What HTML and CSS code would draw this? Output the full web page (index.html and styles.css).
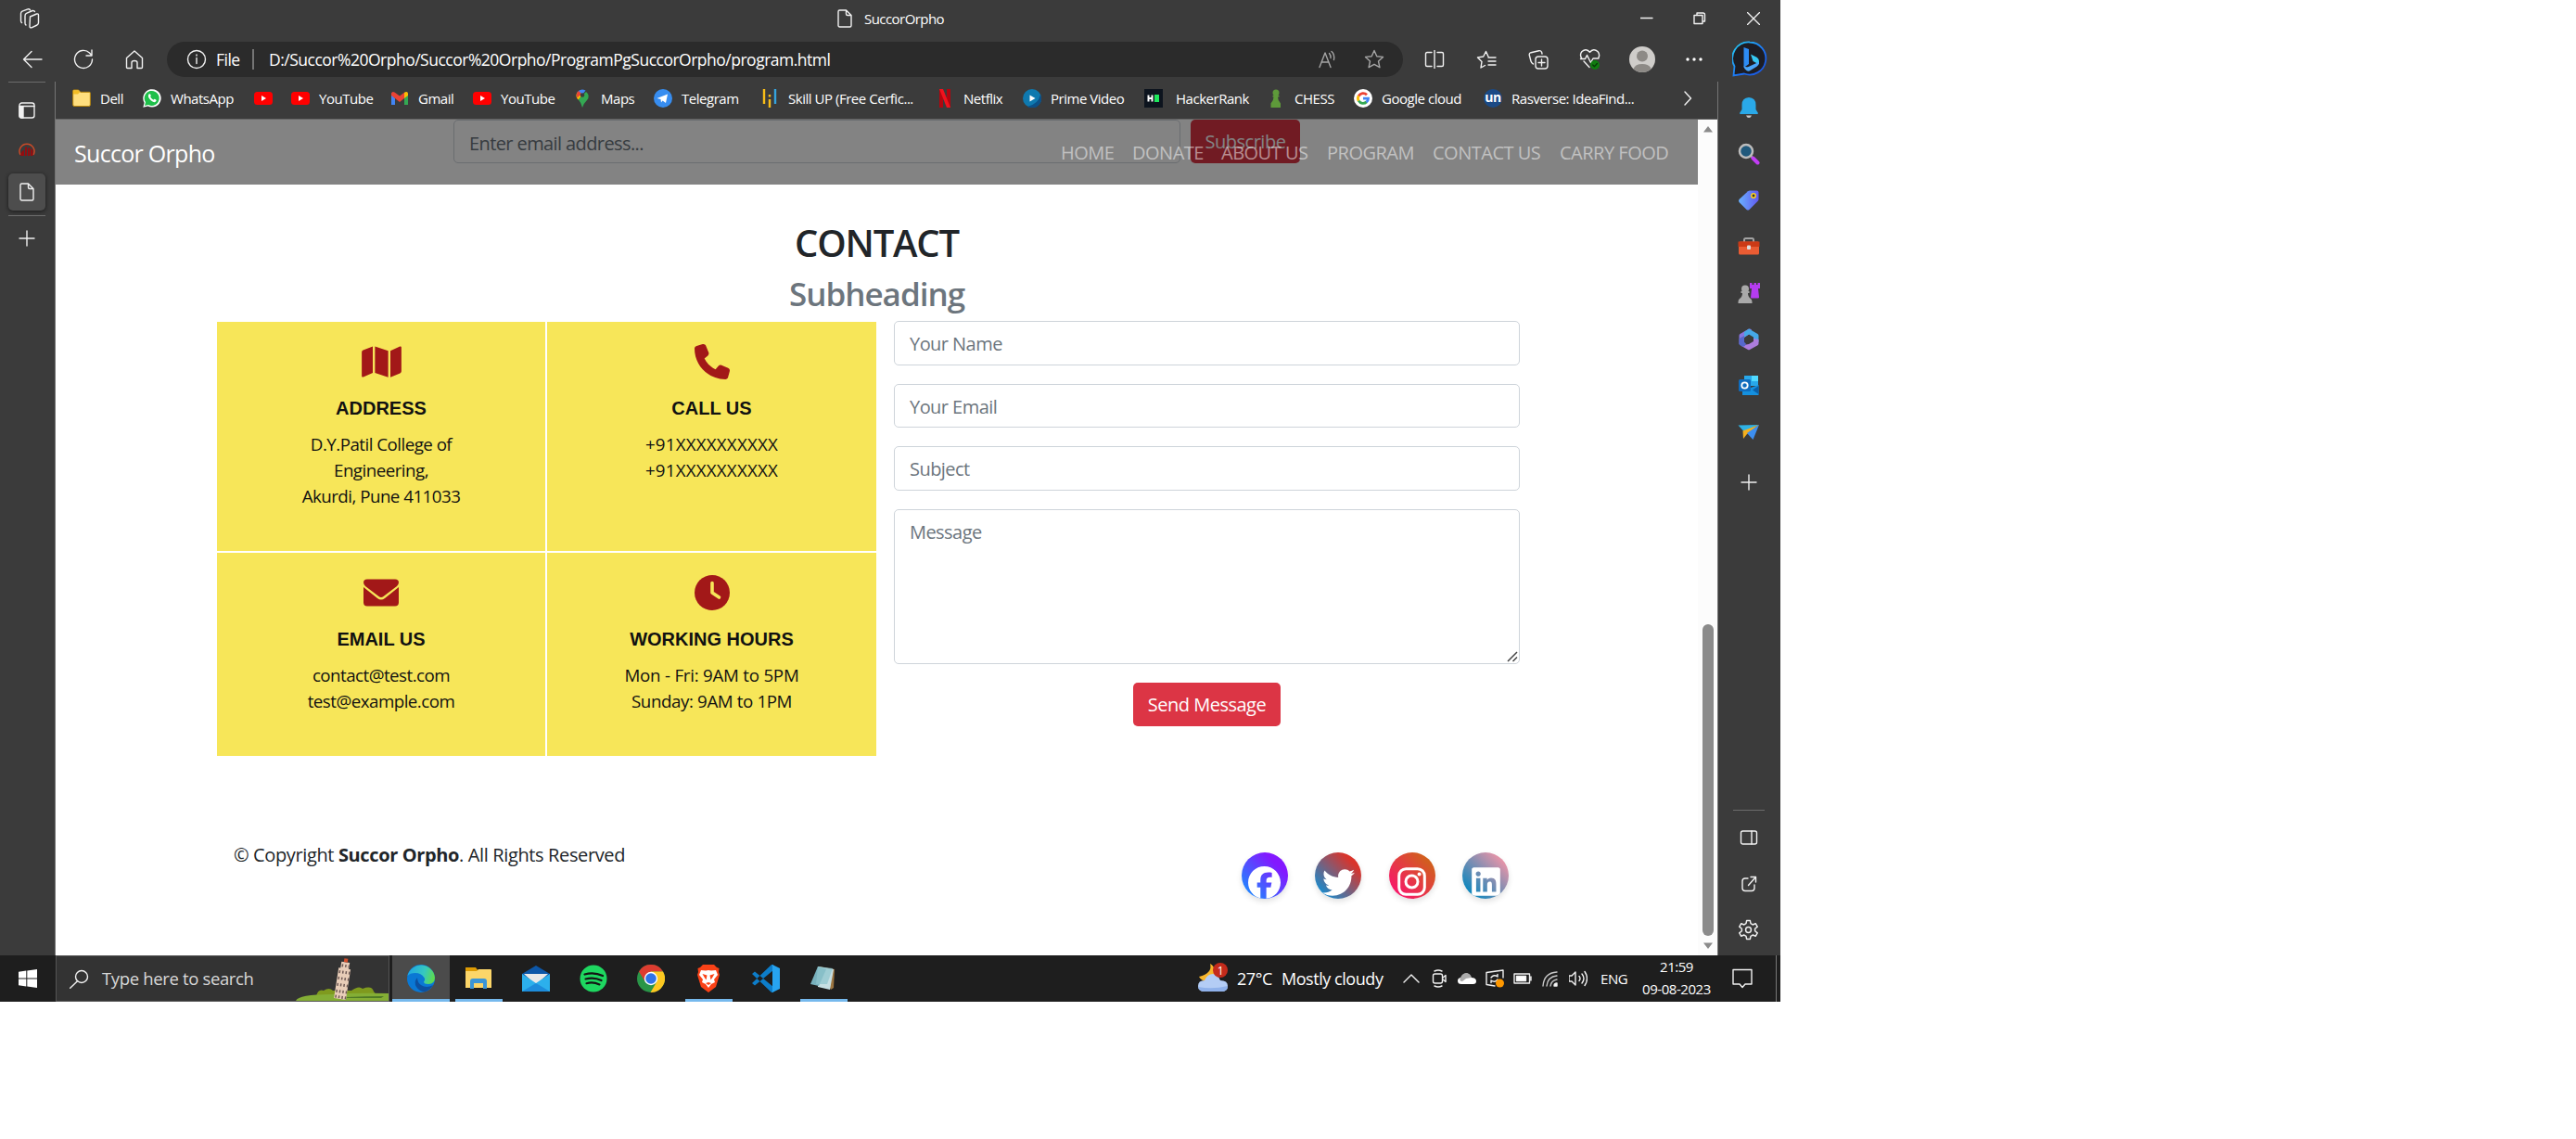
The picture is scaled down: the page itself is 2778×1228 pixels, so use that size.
FILE: index.html
```html
<!DOCTYPE html>
<html lang="en">
<head>
<meta charset="utf-8">
<title>SuccorOrpho</title>
<link rel="stylesheet" href="styles.css">
</head>
<body>
<svg class="defs" aria-hidden="true">
  <symbol id="doc" viewBox="0 0 16 20"><path d="M2.500 1h7L15 6.500V17.500a1.500 1.500 0 0 1-1.500 1.500h-11A1.500 1.500 0 0 1 1 17.500v-15A1.500 1.500 0 0 1 2.500 1zM9.500 1v4a1.500 1.500 0 0 0 1.500 1.500h4"/></symbol>
  <symbol id="yt" viewBox="0 0 20 20"><rect y="3" width="20" height="14" rx="3.500" fill="#f00"/><path d="M8 7v6l5-3z" fill="#fff"/></symbol>
  <symbol id="plus" viewBox="0 0 18 18"><path d="M9 1v16M1 9h16"/></symbol>
</svg>
<div class="screen">
  <header class="titlebar">
    <svg class="ln tabs-icon" viewBox="0 0 22 22"><path d="M11.500 9l7-3q2-.5 2 1.500v8q0 1.700-1.500 2.500l-6 2.800q-2 .5-2-1.500zM7 18q-1-.5-1-2V8q0-2 1.500-2.700l6.500-2.800q2-.3 2.500 1M2.500 15.500q-1-.5-1-2V5.500q0-1.500 1.500-2.300L9 .9q1.500-.4 2.500.8"/></svg>
    <div class="tab-title"><svg class="ln doc"><use href="#doc"/></svg><span>SuccorOrpho</span></div>
    <div class="win-buttons">
      <span><svg class="ln" width="14" height="14"><path d="M0 6.500h13"/></svg></span>
      <span><svg class="ln" width="14" height="14"><path d="M1 3.500h9v9H1zM4 3.500V1h6.500q2 0 2 2v7h-2"/></svg></span>
      <span><svg class="ln" width="14" height="14"><path d="M.5.5l13 13M13.500.5l-13 13"/></svg></span>
    </div>
  </header>

  <div class="toolbar">
    <div class="nav-buttons">
      <span><svg class="ln" width="22" height="20"><path d="M21 10H1.500M10 1.500L1.500 10l8.500 8.500"/></svg></span>
      <span><svg class="ln" width="22" height="22"><path d="M20.500 11a9.500 9.500 0 1 1-3-7l2.500 2.700M20 1v6h-6"/></svg></span>
      <span><svg class="ln" width="20" height="22"><path d="M1.500 9.500L10 2l8.500 7.500v10q0 1-1 1H13v-6q0-2-3-2t-3 2v6H2.500q-1 0-1-1z"/></svg></span>
    </div>
    <div class="address">
      <svg class="ln info" width="22" height="22"><circle cx="11" cy="11" r="9.500"/><path d="M11 9.500v6M11 6v1"/></svg>
      <span class="scheme">File</span>
      <span class="url">D:/Succor%20Orpho/Succor%20Orpho/ProgramPgSuccorOrpho/program.html</span>
      <svg class="ln dim" width="22" height="20"><path d="M2 18.500L8 3l6 15.500M4 13h8M12.500 3.500q2 2.500 1.500 5M15 1.500q3.500 3 2.500 9"/></svg>
      <svg class="ln dim star" width="22" height="22"><path d="M11 1.500l2.800 6.200 6.700.7-5 4.600 1.400 6.700-5.900-3.400-5.900 3.400L6.500 13l-5-4.600 6.700-.7z"/></svg>
    </div>
    <div class="actions">
      <span><svg class="ln" width="22" height="20"><path d="M11 0v20M8 2.500H3q-1.500 0-1.500 1.500v12q0 1.500 1.500 1.500h5M14 2.500h5q1.500 0 1.500 1.500v12q0 1.500-1.500 1.500h-5"/></svg></span>
      <span><svg class="ln" width="22" height="20"><path d="M13 7L10.500 1.500 7.700 7 1.500 8l4.500 4.500-1 6.500 4.500-2.500M13 8h8M13 12h8M13 16h8"/></svg></span>
      <span><svg class="ln" width="22" height="22"><rect x="8" y="8" width="13" height="13" rx="3"/><path d="M14.500 11v7M11 14.500h7M5.500 16Q3.500 15 3 13L1.300 6.500q-.5-2 1.700-2.800l8.500-2q2-.5 3 1.300l.5 2"/></svg></span>
      <span><svg class="ln" width="24" height="24"><path d="M3 11.500Q0 7 3 3.500q4.500-4 8.500.8 4-4.800 8.500-.8 3 3.500.5 7.500M1.500 11.500h5l2-4 4 8 2.500-4.500h6M5 14l6 6.500"/><circle cx="17" cy="18" r="5" fill="#107c10" stroke="none"/><path d="M14.700 18l1.700 1.800 3-3.300" stroke="#073d07"/></svg></span>
      <span><svg width="28" height="28"><circle cx="14" cy="14" r="14" fill="#cfcdca"/><circle cx="14" cy="10.500" r="6" fill="#8d8a86"/><path d="M4.500 24.200a9.800 7 0 0 1 19 0A14 14 0 0 1 4.500 24.200z" fill="#8d8a86"/></svg></span>
      <span><svg width="18" height="4" fill="#fff"><circle cx="2" cy="2" r="1.700"/><circle cx="9" cy="2" r="1.700"/><circle cx="16" cy="2" r="1.700"/></svg></span>
      <span class="bing"><svg width="38" height="40" viewBox="0 0 38 40"><defs><linearGradient id="bg" x1="0" y1="0" x2="1" y2="1"><stop offset="0" stop-color="#27d3f5"/><stop offset=".6" stop-color="#1b6ef3"/><stop offset="1" stop-color="#1a4fd8"/></linearGradient></defs><path d="M19 1.500a17.500 17.500 0 1 1-6 34L1.500 37.500l1-10A17.500 17.500 0 0 1 19 1.500z" fill="#1d1d24" stroke="url(#bg)" stroke-width="1.800"/><path d="M12.500 7l5.500 2v16l-5.500 4z" fill="#2d8cf5"/><path d="M20 14.500l6 3q3 1.500 3 5v3l-6.500-3.500z" fill="#35c7f2"/><path d="M12.500 27q0 3 3 5 2 1.300 4 0l7-4.300q2.500-2 2.500-5l-11 5q-3 1.500-5.500-.7z" fill="#4aa6fa"/></svg></span>
    </div>
  </div>

  <div class="middle">
    <aside class="left-rail">
      <svg class="ln" width="18" height="18"><rect x="1" y="1" width="16" height="16" rx="2.500"/><path d="M1 4.500h16"/><path d="M1 5h4v12H3q-2 0-2-2z" fill="#f1f1f1"/></svg>
      <svg width="18" height="16"><path d="M2 13A8 8 0 1 1 16 13" fill="none" stroke="#c84a28" stroke-width="1.500"/><path d="M2 14l1-4 3-2.500V14zM7 14V5l2-1v10zM10 14V6l2.200-1v9zM13 14V6l2.500 2v6z" fill="#930d10"/></svg>
      <span class="active-tab"><svg class="ln doc"><use href="#doc"/></svg></span>
      <hr>
      <svg class="ln new-tab" width="18" height="18"><use href="#plus"/></svg>
    </aside>

    <div class="center">
      <nav class="bookmarks">
        <a><svg viewBox="0 0 20 20"><path d="M.7 2q0-1 1-1h5l2 2.300h9.600q1 0 1 1V17q0 1.500-1.500 1.500H2.200Q.7 18.500.7 17z" fill="#ffdf7e" stroke="#b8860b"/><path d="M1 1.500h5.500l1.500 2-2 2H1z" fill="#f3bd26"/></svg>Dell</a>
        <a><svg viewBox="0 0 20 20"><path d="M.3 19.800l1.300-5A9.700 9.700 0 1 1 5.500 18.500z" fill="#fff"/><path d="M2 18l1-3.700A8 8 0 1 1 6 17z" fill="#1fbf4a"/><path d="M6.500 5.500q1.500-1 2 .8.700 1.400-.4 2 1.200 2.500 3.300 3.400 1-1.500 2-.7 2 .8 1 2Q13 15.500 9 12.500 4.500 8.500 6.500 5.500z" fill="#fff"/></svg>WhatsApp</a>
        <a><svg><use href="#yt"/></svg></a>
        <a><svg><use href="#yt"/></svg>YouTube</a>
        <a class="g"><svg viewBox="0 0 20 16"><path d="M1 2.500V15h4V8z" fill="#4285f4"/><path d="M19 2.500V15h-4V8z" fill="#34a853"/><path d="M19 2.500q-1-2.500-4-.8V8l4-3z" fill="#fbbc04"/><path d="M1 5V2.500q1-2.500 3.500-1L10 5.500l5-3.800V8l-5 4-5-4z" fill="#ea4335"/></svg>Gmail</a>
        <a><svg><use href="#yt"/></svg>YouTube</a>
        <a><svg viewBox="0 0 20 20"><path d="M10 20Q9 15 5.500 11L14 3q5 4 1 9-4 4-5 8z" fill="#34a853"/><path d="M4.500 3.500Q2 8 5.500 11.500L9 7.500z" fill="#fbbc04"/><path d="M4.500 3.700Q8-1.500 13.500 1.500L9 7.500z" fill="#4285f4"/><path d="M4 5q.5-2 2-3l3 3-4.500 4.500Q3.500 7 4 5z" fill="#ea4335"/><circle cx="10" cy="6.500" r="2.300" fill="#3c3c3c"/></svg>Maps</a>
        <a><svg viewBox="0 0 20 20"><circle cx="10" cy="10" r="10" fill="#378df0"/><path d="M3.500 10L15 5.500l-2 9.500-3.500-2.500-1.500 2-.5-3.500z" fill="#fff"/></svg>Telegram</a>
        <a><svg viewBox="0 0 20 20" stroke-width="2.400"><path d="M4 0v16M10 11v9M10 6v2.500" stroke="#f8bd18"/><path d="M16 0v16" stroke="#35a4dd"/></svg>Skill UP (Free Cerfic...</a>
        <a><svg viewBox="0 0 20 20"><path d="M4 0h4v20H4zM12 0h4v20h-4z" fill="#b1060f"/><path d="M4 0h4l8 20h-4z" fill="#f1121d"/></svg>Netflix</a>
        <a><svg viewBox="0 0 20 20"><circle cx="10" cy="10" r="10" fill="#0f79af"/><path d="M19 6a10 10 0 0 1-14 13Q17 16 19 6z" fill="#0c4f86"/><path d="M7.500 6.500v7l6-3.500z" fill="#fff"/></svg>Prime Video</a>
        <a><svg viewBox="0 0 20 20"><path fill="#0d141e" d="M0 0h20v20H0z"/><path d="M4.500 6.500v7M8.500 6.500v7M4.500 10h4" stroke="#fff" stroke-width="2"/><path fill="#1ee65c" d="M11 6h5v8h-5z"/></svg><b>HackerRank</b></a>
        <a><svg viewBox="0 0 20 20" fill="#5e9a3a"><circle cx="10" cy="4" r="3.500"/><path d="M6.500 7h7v1.500h-1.500q0 4 3 7V20H4.500v-4.500q3-3 3-7H6.500z"/></svg>CHESS</a>
        <a><svg viewBox="0 0 20 20" fill="none" stroke-width="2.800"><circle cx="10" cy="10" r="10" fill="#fff"/><path d="M14 6.200A5.500 5.500 0 0 0 5.200 7.500" stroke="#ea4335"/><path d="M5.200 7.300a5.500 5.500 0 0 0 0 5.500" stroke="#fbbc04"/><path d="M5.200 12.600a5.500 5.500 0 0 0 8.500 1.300" stroke="#34a853"/><path d="M10 10.200h5.500q0 2.500-2 4" stroke="#4285f4"/></svg>Google cloud</a>
        <a><i class="un">un</i>Rasverse: IdeaFind...</a>
        <a class="more"><svg class="ln" viewBox="0 0 20 20"><path d="M7 3l6.500 7L7 17"/></svg></a>
      </nav>

      <div class="viewport">
        <main class="page">
          <div class="newsletter"><div class="field">Enter email address...</div><div class="btn">Subscribe</div></div>
          <div class="site-nav">
            <span class="brand">Succor Orpho</span>
            <span>HOME</span><span>DONATE</span><span>ABOUT US</span><span>PROGRAM</span><span>CONTACT US</span><span>CARRY FOOD</span>
          </div>
          <h1>CONTACT</h1>
          <h2>Subheading</h2>
          <div class="contact">
            <div class="cards">
              <section><svg class="map" viewBox="0 0 576 512"><path d="M0 117.660v346.320c0 11.320 11.430 19.060 21.940 14.860L160 416V32L20.120 87.950A32.006 32.006 0 0 0 0 117.660zM192 416l192 64V96L192 32v384zM554.060 33.160L416 96v384l139.880-55.950A31.996 31.996 0 0 0 576 394.340V48.020c0-11.320-11.430-19.060-21.940-14.860z"/></svg><h3>ADDRESS</h3><p>D.Y.Patil College of<br>Engineering,<br>Akurdi, Pune 411033</p></section>
              <section><svg viewBox="0 0 512 512"><path d="M164.900 24.600c-7.700-18.600-28-28.500-47.400-23.200l-88 24C12.100 30.200 0 46 0 64C0 311.400 200.600 512 448 512c18 0 33.800-12.100 38.600-29.500l24-88c5.300-19.400-4.600-39.700-23.200-47.400l-96-40c-16.300-6.800-35.200-2.100-46.300 11.600L304.700 368C234.300 334.700 177.300 277.700 144 207.300L193.300 167c13.700-11.200 18.400-30 11.600-46.300l-40-96z"/></svg><h3>CALL US</h3><p class="phone">+91XXXXXXXXXX<br>+91XXXXXXXXXX</p></section>
              <section><svg viewBox="0 0 38 38"><path d="M4 4.500h30q4 0 4 3.500 0 2-2 4L21.500 23q-2.500 2-5 0L2 12Q0 10 0 8q0-3.500 4-3.500z"/><path d="M0 13l15 12q4 3 8 0l15-12v16.500q0 4-4 4H4q-4 0-4-4z"/></svg><h3>EMAIL US</h3><p>contact@test.com<br>test@example.com</p></section>
              <section><svg viewBox="0 0 38 38"><circle cx="19" cy="19" r="19"/><path d="M19 8.500V19l7.500 5" fill="none" stroke="#f7e659" stroke-width="3.600" stroke-linecap="round" stroke-linejoin="round"/></svg><h3>WORKING HOURS</h3><p class="hours">Mon - Fri: 9AM to 5PM<br><span>Sunday: 9AM to 1PM</span></p></section>
            </div>
            <form class="form">
              <div class="field">Your Name</div>
              <div class="field">Your Email</div>
              <div class="field">Subject</div>
              <div class="field area">Message<svg class="grip" width="12" height="12"><path d="M1 11L11 1M6.500 11L11 6.500" stroke="#444" stroke-width="1.500"/></svg></div>
              <div class="btn send">Send Message</div>
            </form>
          </div>
          <footer class="footer">
            <p>© Copyright <strong>Succor Orpho</strong>. All Rights Reserved</p>
            <div class="social">
              <a class="fb"><svg viewBox="0 0 512 512"><path d="M512 256C512 114.600 397.400 0 256 0S0 114.600 0 256C0 376 82.700 476.800 194.200 504.500V334.200H141.400V256h52.800V222.300c0-87.100 39.400-127.500 125-127.500c16.200 0 44.200 3.200 55.700 6.400V172c-6-.6-16.500-1-29.600-1c-42 0-58.200 15.900-58.200 57.200V256h83.600l-14.400 78.200H287V510.100C413.800 494.800 512 386.900 512 256h0z"/></svg></a>
              <a class="tw"><svg viewBox="0 0 512 512"><path d="M459.370 151.716c.325 4.548.325 9.097.325 13.645 0 138.720-105.583 298.558-298.558 298.558-59.452 0-114.680-17.219-161.137-47.106 8.447.974 16.568 1.299 25.340 1.299 49.055 0 94.213-16.568 130.274-44.832-46.132-.975-84.792-31.188-98.112-72.772 6.498.974 12.995 1.624 19.818 1.624 9.421 0 18.843-1.300 27.614-3.573-48.081-9.747-84.143-51.980-84.143-102.985v-1.299c13.969 7.797 30.214 12.670 47.431 13.319-28.264-18.843-46.781-51.005-46.781-87.391 0-19.492 5.197-37.360 14.294-52.954 51.655 63.675 129.300 105.258 216.365 109.807-1.624-7.797-2.599-15.918-2.599-24.040 0-57.828 46.782-104.934 104.934-104.934 30.213 0 57.502 12.670 76.670 33.137 23.715-4.548 46.456-13.320 66.599-25.340-7.798 24.366-24.366 44.833-46.132 57.827 21.117-2.273 41.584-8.122 60.426-16.243-14.292 20.791-32.161 39.308-52.628 54.253z"/></svg></a>
              <a class="ig"><svg viewBox="0 0 35 35"><rect x="3.700" y="3.700" width="27.600" height="27.600" rx="7.500" fill="none" stroke="#fff" stroke-width="3"/><circle cx="17.500" cy="17.500" r="6.500" fill="none" stroke="#fff" stroke-width="3"/><circle cx="25.600" cy="9.400" r="2"/></svg></a>
              <a class="li"><svg viewBox="-32 0 512 512"><path d="M416 32H31.900C14.300 32 0 46.500 0 64.300v383.400C0 465.500 14.300 480 31.900 480H416c17.600 0 32-14.500 32-32.300V64.300c0-17.800-14.400-32.300-32-32.300zM135.400 416H69V202.200h66.500V416zm-33.200-243c-21.300 0-38.500-17.300-38.500-38.500S80.900 96 102.200 96c21.200 0 38.500 17.300 38.500 38.500 0 21.300-17.200 38.500-38.500 38.500zm282.100 243h-66.400V312c0-24.800-.5-56.700-34.500-56.700-34.600 0-39.900 27-39.900 54.900V416h-66.400V202.200h63.700v29.200h.9c8.900-16.800 30.600-34.500 62.900-34.500 67.200 0 79.700 44.300 79.700 101.900V416z"/></svg></a>
            </div>
          </footer>
        </main>
        <div class="scrollbar">
          <svg width="12" height="8"><path d="M1 7.500L6 1l5 6.500z"/></svg>
          <i></i>
          <svg width="12" height="8"><path d="M1 .5L6 7 11 .5z"/></svg>
        </div>
      </div>
    </div>

    <aside class="right-rail">
      <svg viewBox="0 0 24 24"><path d="M12 1Q4.500 1.500 4.500 9v5L2 18q0 1 1 1h18q1 0 1-1l-2.500-4V9Q19.500 1.500 12 1z" fill="#2aa9e8"/><path d="M9 20.500h6q-1 2.500-3 2.500t-3-2.500z" fill="#c9c9c9"/></svg>
      <svg viewBox="0 0 24 24"><path d="M14 14l3 3" stroke="#999" stroke-width="2.500"/><path d="M16.500 16.500l5 5" stroke="#c23df5" stroke-width="4" stroke-linecap="round"/><circle cx="9" cy="9" r="7" fill="#20597c" stroke="#bcbcbc" stroke-width="2.500"/></svg>
      <svg viewBox="0 0 24 24"><defs><linearGradient id="tg" x1="0" x2="1"><stop stop-color="#69b1ff"/><stop offset="1" stop-color="#6259f0"/></linearGradient></defs><path d="M13 1.500h7.500q2 0 2 2V11q0 1-1 2l-9 9q-1.500 1-3 0l-8-8q-1-1.500 0-3L11 2.300q1-.8 2-.8z" fill="url(#tg)"/><circle cx="17" cy="7" r="2.200" fill="#333" stroke="#ffd21e" stroke-width="1.500"/></svg>
      <svg viewBox="0 0 24 24"><path d="M7 7V4.500q0-1.500 1.500-1.500h7Q17 3 17 4.500V7" fill="none" stroke="#a3a3a3" stroke-width="2"/><rect x="1" y="6.500" width="22" height="14" rx="1.500" fill="#ea5c33"/><path d="M.5 6.500h23V12H.5z" fill="#cb3a16"/><rect x="10" y="10.500" width="4" height="4.500" rx="1" fill="#ddd"/></svg>
      <svg viewBox="0 0 24 24"><path d="M13 1h2.500v2h2V1H20v2h1.500V1H24v6h-2l1 9.500q0 1-1 1h-7q-1 0-1-1L15 7h-2z" fill="#b53cf0"/><g fill="#a9a9a9"><circle cx="8" cy="7.500" r="4"/><path d="M3.500 10h9v2H11q0 4 3 6 1.500 1 1.500 3.500v1.500H.5v-1.500Q.5 19 2 18q3-2 3-6H3.500z"/></g></svg>
      <svg viewBox="0 0 24 24"><path d="M12 .5L2.500 6q-1 .7-1 2v9L7 20V10l5-3.500 3-5q-1.500-1.500-3-1z" fill="#8a74e0"/><path d="M12 .5l9.500 5.500q1 .7 1 2v7L17 12V9.500L12 6.500l-5 3V4z" fill="#45a9e8"/><path d="M22.500 12v4.500q0 1-1 1.700L13 23q-1 .6-2 0l-7-4 5-1.500 3-.5 5-3v-3z" fill="#ad7ddd"/><path d="M1.500 11v5.500q0 1 1 1.700l3 1.500q2.500 0 3.500-3l-2-2V8z" fill="#5668cc"/></svg>
      <svg viewBox="0 0 24 24"><path fill="#28a8ea" d="M7 1h15v11H7z"/><path fill="#50d9ff" d="M15 1h7v6h-7z"/><path fill="#1490df" d="M5 11l9 3 8.500-3v11H5z"/><path fill="#0a5fa8" d="M22.500 12v9L16 16.500z"/><rect x="1" y="5" width="13" height="13" rx="1.500" fill="#0f6cbd"/><circle cx="7.500" cy="11.500" r="3.200" fill="none" stroke="#fff" stroke-width="1.800"/></svg>
      <svg viewBox="0 0 24 24"><path d="M.5 4.500L23 4 6.500 11z" fill="#2fb2e5"/><path d="M23 4L5.500 10.500 6 19l4-5z" fill="#f5b01e"/><path d="M23 4L10 13l6.500 7z" fill="#3d8ff0"/></svg>
      <svg class="ln add" width="18" height="18"><use href="#plus"/></svg>
      <div class="rail-foot">
        <svg class="ln small" viewBox="0 0 20 20"><rect x="1.500" y="3" width="17" height="14" rx="2"/><path d="M13 3v14"/></svg>
        <svg class="ln small" viewBox="0 0 20 20"><path d="M9 4H6Q3 4 3 7v7.500q0 3 3 3h7q3 0 3-3V11M9.500 11.500l8-9M12 2.500h5.500V8"/></svg>
        <svg class="ln gear" viewBox="0 0 22 22"><circle cx="11" cy="11" r="2.800"/><path d="M9.200 1.500h3.600l.6 3 2 1.200 3-1.200 1.900 3.300-2.500 2v2.400l2.500 2-1.900 3.300-3-1.200-2 1.200-.6 3H9.200l-.6-3-2-1.200-3 1.200-1.900-3.300 2.500-2V9.800l-2.500-2 1.900-3.300 3 1.200 2-1.200z"/></svg>
      </div>
    </aside>
  </div>

  <footer class="taskbar">
    <div class="start"><svg width="20" height="20" fill="#fff"><path d="M0 2.700L8.300 1.500v8H0zM9.300 1.400L20 0v9.500H9.300zM0 10.500h8.300v8L0 17.300zM9.300 10.500H20V20L9.300 18.600z"/></svg></div>
    <div class="search">
      <svg class="ln" width="21" height="21"><circle cx="13" cy="8" r="6.500"/><path d="M8.500 12.700L.7 20.300"/></svg>
      <span>Type here to search</span>
      <svg class="tower" viewBox="0 0 100 48"><path d="M22 43q2-8 8-6 6-4 10 0h20q8-6 12-2 10-4 12 3l4 5z" fill="#7f9a1e"/><path d="M0 48q3-7 38-7 30-2 62-1v8z" fill="#84ae35"/><path d="M55 44q20-1 40-1l-3 2H55z" fill="#4f7a26"/><g transform="rotate(9 48 46)"><path d="M43 6h9v7h2v33H41V13h2z" fill="#e8cdb8"/><path d="M44 10h8M42 17h12M42 24h12M42 31h12M42 38h12M42 44h12" stroke="#6f5a55" stroke-width="3" stroke-dasharray="1.500 2"/><path d="M45.500 2h4v4h-4z" fill="#d44f2c"/></g></svg>
    </div>
    <div class="apps">
      <span class="focus"><svg viewBox="0 0 30 30"><defs><linearGradient id="e1" x1="0" y1=".3" x2="1" y2=".5"><stop stop-color="#1fa6e4"/><stop offset=".6" stop-color="#36c8c0"/><stop offset="1" stop-color="#5edb4d"/></linearGradient></defs><circle cx="15" cy="15" r="15" fill="#0a78d4"/><path d="M.5 12A15 15 0 0 1 30 14q0 6.500-7 7-5 0-5-2.500 2-2 .5-4.500Q15 9 9 9 3 9 .5 12z" fill="url(#e1)"/><path d="M11 14q-4 5-1 10 4 6 10 5 5-2 8-7-7 4-13 0-4-3-4-8z" fill="#0c50a0"/></svg></span>
      <span class="open"><svg viewBox="0 0 30 30"><path d="M1 3h11l3 4h12v6H1z" fill="#dd9b04"/><path d="M1 7h12l2-2h13q1 0 1 1v19H1z" fill="#fcd669"/><path d="M6 26V18q0-3 3-3h12q3 0 3 3v8h-4v-6H10v6z" fill="#3b95d6"/></svg></span>
      <span><svg viewBox="0 0 30 30"><path d="M0 10L15 1l15 9v4H0z" fill="#0d57a8"/><path d="M2 10h26L15 22z" fill="#e9e9e9"/><path d="M0 10l15 10L30 10v19H0z" fill="#2cb0ec"/><path d="M0 29l15-9L30 29z" fill="#1d8cdb"/></svg></span>
      <span><svg viewBox="0 0 30 30"><circle cx="15" cy="15" r="14.500" fill="#1ed760"/><path d="M5.500 10.500q10-3 19.500 1.500M6.500 15.500q9-2.500 17 1.500M7.500 20.200q7-2 14 1.200" fill="none" stroke="#141414" stroke-width="2.200" stroke-linecap="round"/></svg></span>
      <span><svg viewBox="0 0 30 30"><circle cx="15" cy="15" r="15" fill="#2a9548"/><path d="M2 7.500A15 15 0 0 1 28 7.500H15L8.500 18z" fill="#dd3c30"/><path d="M28 7.500A15 15 0 0 1 14.500 30L21.500 18 15 7.500z" fill="#fdc821"/><circle cx="15" cy="15" r="7.200" fill="#fff"/><circle cx="15" cy="15" r="5.800" fill="#2f73e8"/></svg></span>
      <span class="open"><svg viewBox="0 0 30 30"><path d="M9 0h12l3 3 2.500 1-.5 4 1 3-4 13-8 6-8-6L3 11l1-3-.5-4L6 3z" fill="#fa4217"/><path d="M7 6l5 .5 3-.5 3 .5L23 6l2 5-4 5 1 3-4 2-3 4-3-4-4-2 1-3-4-5z" fill="#fff"/><path d="M8.500 10l5 1.500-1 5-2-3zM21.500 10l-5 1.500 1 5 2-3zM12 20l3 2 3-2-3-1z" fill="#fa4217"/></svg></span>
      <span><svg viewBox="0 0 30 30"><path d="M0 10l3-2.500L23 24v6h-2zM0 20l3 2.500L23 6V0h-2z" fill="#0d7dc9"/><path d="M22 0l8 4v22l-8 4z" fill="#27a4f0"/></svg></span>
      <span class="open"><svg viewBox="0 0 30 30"><path d="M10 2l17 3-1 20-3 2z" fill="#9b7440"/><path d="M9 2l17 3-4 22-13-3z" fill="#c7dfe3"/><path d="M9 2L1 21l9 2 8-18z" fill="#78b1bd"/><path d="M9 2l16 2-6 17H7z" fill="#8fc4cd" opacity=".7"/></svg></span>
    </div>
    <div class="tray">
      <svg class="weather" viewBox="0 0 32 32"><path d="M13 1q3 10-12 14 3 6 12 5 6-5 5-12-1-5-5-7z" fill="#f8b62b"/><path d="M7 31q-7 0-7-6t7-6q3-7 9-7 6 1 8 7 8 0 8 6t-7 6z" fill="#b4cdf5"/><path d="M7 31q-6 0-7-5 16 3 32-1 0 6-7 6z" fill="#8fb1ea"/><circle cx="24" cy="8" r="8" fill="#c42b1c"/><text x="24" y="12.500" text-anchor="middle">1</text></svg>
      <span class="temp">27°C</span><span class="sky">Mostly cloudy</span>
      <span class="ti"><svg class="ln" viewBox="0 0 20 20"><path d="M2 14l8-8 8 8"/></svg></span>
      <span class="ti"><svg class="ln" viewBox="0 0 20 20"><rect x="3.500" y="5" width="10" height="10" rx="2"/><path d="M14 9l3-2.500v7L14 11M5 2q4-2 8 0M5 18q4 2 8 0"/></svg></span>
      <span class="ti"><svg viewBox="0 0 20 20"><path d="M4 16Q0 16 0 12.500T4 9q1-4 5-4.500 4 0 5.500 4.500Q20 9 20 13q0 3-3.500 3z" fill="#fff"/><path d="M3 9q2-5 7-5 4 1 5 5l-6 1-4 3Q1 13 3 9z" fill="#aaa"/></svg></span>
      <span class="ti"><svg class="ln" viewBox="0 0 20 20"><path d="M19 9V1L1 3.500v13l9 1.500M6 9q3-4 7-1V5.500M13 11q-3 4-7 1v2.500"/><circle cx="15.500" cy="15" r="4.500" fill="#ff9800" stroke="none"/></svg></span>
      <span class="ti"><svg class="ln" viewBox="0 0 20 20"><path d="M1 5h16.500v10H1zM19 8v4"/><path fill="#fff" d="M3.500 7.500h10v5h-10z"/></svg></span>
      <span class="ti"><svg class="ln" viewBox="0 0 20 20"><path d="M2 18Q3 4 17 3M6 18Q7 8 17 7M10 18q1-6 7-7" opacity=".8"/><path d="M14 18q0-3 3-3v3z" fill="#fff"/></svg></span>
      <span class="ti"><svg class="ln" viewBox="0 0 20 20"><path d="M0 7h3l4-4v14l-4-4H0zM11 7.500q2 2.500 0 5M14 5q4 5 0 10M17 2.500q5 7.500 0 15"/></svg></span>
      <span class="lang">ENG</span>
      <span class="clock"><span>21:59</span><span>09-08-2023</span></span>
      <svg class="ln notif" width="22" height="22"><path d="M1 1.500h20v15.500h-7l-3 3.500-3-3.500H1z"/></svg>
      <i class="peek"></i>
    </div>
  </footer>
</div>
</body>
</html>
```
FILE: styles.css
```css
* { box-sizing: border-box; }
body { margin: 0; background: #fff; font-family: "Open Sans", "Noto Sans", sans-serif; color: #212529; }
h1, h2, h3, p { margin: 0; }
i { font-style: normal; }
.defs { display: none; }
svg { flex: none; }
.ln { fill: none; stroke: #f1f1f1; stroke-width: 1.4; stroke-linecap: round; stroke-linejoin: round; }
.screen { width: 1920px; height: 1080px; display: flex; flex-direction: column; background: #3b3b3b; color: #fff; white-space: nowrap; overflow: hidden; }

.titlebar { height: 45px; display: flex; align-items: flex-start; }
.tabs-icon { width: 22px; height: 22px; margin: 9px 0 0 21px; }
.tab-title { display: flex; align-items: center; gap: 13px; margin: 10px 0 0 860px; width: 844px; height: 20px; font-size: 15px; letter-spacing: -.55px; }
.doc { width: 16px; height: 20px; }
.win-buttons { display: flex; height: 40px; }
.win-buttons span { width: 57.5px; display: flex; align-items: center; justify-content: center; }

.toolbar { height: 43px; display: flex; align-items: flex-start; }
.nav-buttons { display: flex; width: 180px; height: 38px; padding-left: 7px; }
.nav-buttons span { width: 55px; display: flex; align-items: center; justify-content: center; }
.address { width: 1333px; height: 38px; border-radius: 19px; background: #2b2b2b; display: flex; align-items: center; padding: 0 20px 0 21px; font-size: 17.5px; letter-spacing: -.5px; }
.scheme { margin-left: 10px; width: 41px; height: 22px; line-height: 22px; border-right: 2px solid #757575; }
.url { margin-left: 16px; flex: 1; line-height: 22px; margin-top: -1px; }
.dim { stroke: #a5a5a5; }
.star { margin-left: 28px; }
.actions { display: flex; height: 38px; padding-left: 6px; }
.actions span { width: 56px; display: flex; align-items: center; justify-content: center; }
.actions .bing { width: 64px; }

.middle { height: 942px; display: flex; }
.left-rail { width: 59px; display: flex; flex-direction: column; align-items: center; padding: 22px 1px 0 0; }
.left-rail::before { content: ""; width: 40px; height: 1px; background: #6c6c6c; margin-top: -22px; margin-bottom: 21px; }
.left-rail > svg + svg { margin-top: 26px; }
.active-tab { width: 40px; height: 40px; margin-top: 17px; border-radius: 5px; background: #4d4d4d; box-shadow: 0 1px 4px #1a1a1a; display: flex; align-items: center; justify-content: center; }
.left-rail hr { width: 40px; height: 1px; border: 0; background: #6c6c6c; margin: 5px 0 0; }
.new-tab { margin-top: 15px; }
.center { width: 1794px; border: solid #747474; border-width: 0 1px; display: flex; flex-direction: column; }
.bookmarks { height: 41px; border-bottom: 1px solid #666; padding: 0 0 5px 18px; display: grid; grid-template-columns: 76px 120px 40px 107px 89px 108px 87px 115px 189px 94px 131px 132px 94px 140px 210px 40px; align-items: center; font-size: 15px; line-height: 20px; letter-spacing: -.47px; }
.bookmarks a { display: flex; align-items: center; gap: 10px; }
.bookmarks svg { width: 20px; height: 20px; }
.bookmarks b { font-weight: 400; margin-left: 4px; }
.un { width: 20px; height: 20px; border-radius: 50%; background: #1b4a85; font: bold 14px/17px "Open Sans", sans-serif; text-align: center; letter-spacing: -.5px; }
.viewport { flex: 1; display: flex; background: #fff; color: #212529; }
.page { width: 1771px; position: relative; font-size: 20px; }
.scrollbar { width: 21px; background: #fcfcfc; fill: #8a8a8a; display: flex; flex-direction: column; align-items: center; padding: 6px 0 6px; }
.scrollbar i { width: 12px; height: 336px; border-radius: 6px; background: #8b8b8b; margin: 530px 0 auto; }

.newsletter { display: flex; gap: 11px; padding-left: 429px; height: 47px; }
.field { height: 47.500px; border: 1px solid #ced4da; border-radius: 5px; padding: 0 16px; line-height: 47px; color: #6c757d; letter-spacing: -.55px; }
.newsletter .field { width: 784px; height: 47px; line-height: 49px; letter-spacing: -.6px; }
.btn { height: 47px; border-radius: 5px; background: #dc3545; color: #fff; line-height: 48px; text-align: center; letter-spacing: -.5px; }
.newsletter .btn { width: 118px; }
.site-nav { position: absolute; inset: 0 0 auto 0; height: 70px; background: rgba(0, 0, 0, .486); color: rgba(255, 255, 255, .5); display: grid; grid-template-columns: 1064px 77px 96px 114px 114px 137px 130px; padding-left: 20px; align-items: center; line-height: 72px; letter-spacing: -.5px; }
.brand { font-size: 25px; color: #fff; letter-spacing: -.7px; }
h1 { margin-top: 61px; height: 50px; line-height: 50px; font-size: 40px; font-weight: 600; text-align: center; letter-spacing: -1.200px; }
h2 { margin-top: 6px; height: 48px; line-height: 47px; font-size: 35px; font-weight: 600; color: #6c757d; text-align: center; letter-spacing: -1px; }
.contact { display: flex; gap: 19px; margin-top: 5px; padding-left: 174px; }
.cards { display: grid; grid-template-columns: 354px 355px; grid-template-rows: 247px 219px; gap: 2px; margin-top: 1px; color: #111; text-align: center; }
.cards section { background: #f7e659; padding-top: 24px; }
.cards svg { display: block; width: 38px; height: 38px; margin: 0 auto; fill: #a21818; }
.cards .map { width: 43px; }
.cards h3 { margin-top: 19px; font: bold 20px/24px "Liberation Sans", sans-serif; }
.cards p { margin-top: 12.500px; font-size: 18.750px; line-height: 28.100px; letter-spacing: -.53px; }
.cards .phone { letter-spacing: .2px; }
.cards .hours { letter-spacing: -.25px; }
.hours span { letter-spacing: -.4px; }
.form { width: 675px; display: flex; flex-direction: column; gap: 20px; }
.form .area { height: 167.500px; position: relative; }
.grip { position: absolute; right: 1px; bottom: 1px; }
.form .send { width: 159px; align-self: center; }
.footer { display: flex; justify-content: space-between; padding: 87.500px 204px 0 192px; }
.footer p { line-height: 38px; letter-spacing: -.37px; }
.social { display: flex; gap: 29.500px; margin-top: 16px; }
.social a { width: 50px; height: 50px; border-radius: 50%; overflow: hidden; box-shadow: 0 3px 6px rgba(0, 0, 0, .12); }
.social svg { display: block; width: 35px; height: 35px; margin: 15px auto 0; fill: #fff; }
.social .ig svg, .social .li svg { margin-top: 14px; }
.fb { background: linear-gradient(45deg, #0e9bff, #8318ff 75%); }
.tw { background: linear-gradient(45deg, #1f88c8 15%, #d9342b 80%); }
.ig { background: linear-gradient(45deg, #ff0a78, #d0601c 85%); }
.li { background: linear-gradient(45deg, #1087bd 15%, #e694a8 85%); }

.right-rail { width: 67px; display: flex; flex-direction: column; align-items: center; padding: 3px 2px 0 0; }
.right-rail > svg { width: 24px; height: 24px; margin: 13px 0; }
.right-rail > .add { width: 18px; height: 18px; margin: 20px 0; }
.rail-foot { margin-top: auto; border-top: 1px solid #6c6c6c; width: 34px; height: 157px; padding-top: 4px; display: flex; flex-direction: column; align-items: center; }
.rail-foot svg { width: 20px; height: 20px; margin: 15px 0; }
.rail-foot .gear { width: 23px; height: 23px; margin: 13px 0; }

.taskbar { height: 50px; background: #1e1e1e; display: flex; }
.start { width: 60px; display: flex; align-items: center; justify-content: center; }
.search { width: 360px; background: #333; border: 1px solid #555; display: flex; align-items: center; padding-left: 14px; font-size: 18.500px; color: #d8d8d8; letter-spacing: -.35px; }
.search span { margin: -1px 0 0 14px; flex: 1; }
.tower { width: 100px; height: 48px; }
.apps { display: flex; padding-left: 3px; }
.apps span { width: 62px; display: flex; align-items: center; justify-content: center; border: solid transparent; border-width: 3px 0; }
.apps svg { width: 30px; height: 30px; }
.apps .focus { background: #4b4b4b; border-color: #4b4b4b #4b4b4b #76b9ed; }
.apps .open { background: linear-gradient(#76b9ed, #76b9ed) bottom / 51px 3px no-repeat border-box; }
.tray { display: flex; align-items: center; margin-left: auto; width: 628px; font-size: 18px; letter-spacing: -.45px; }
.weather { width: 32px; height: 32px; margin-top: -2px; }
.weather text { font-size: 12px; fill: #fff; }
.temp { margin-left: 10px; width: 48px; }
.sky { width: 125px; }
.ti { width: 30px; display: flex; justify-content: center; }
.ti svg { width: 20px; height: 20px; }
.lang { width: 36px; margin-left: 9px; font-size: 15px; }
.clock { width: 92px; display: flex; flex-direction: column; align-items: center; font-size: 15px; line-height: 24px; margin-top: -2px; }
.notif { margin-left: 14px; }
.peek { width: 1px; height: 50px; background: #777; margin-left: auto; margin-right: 4px; }
```
